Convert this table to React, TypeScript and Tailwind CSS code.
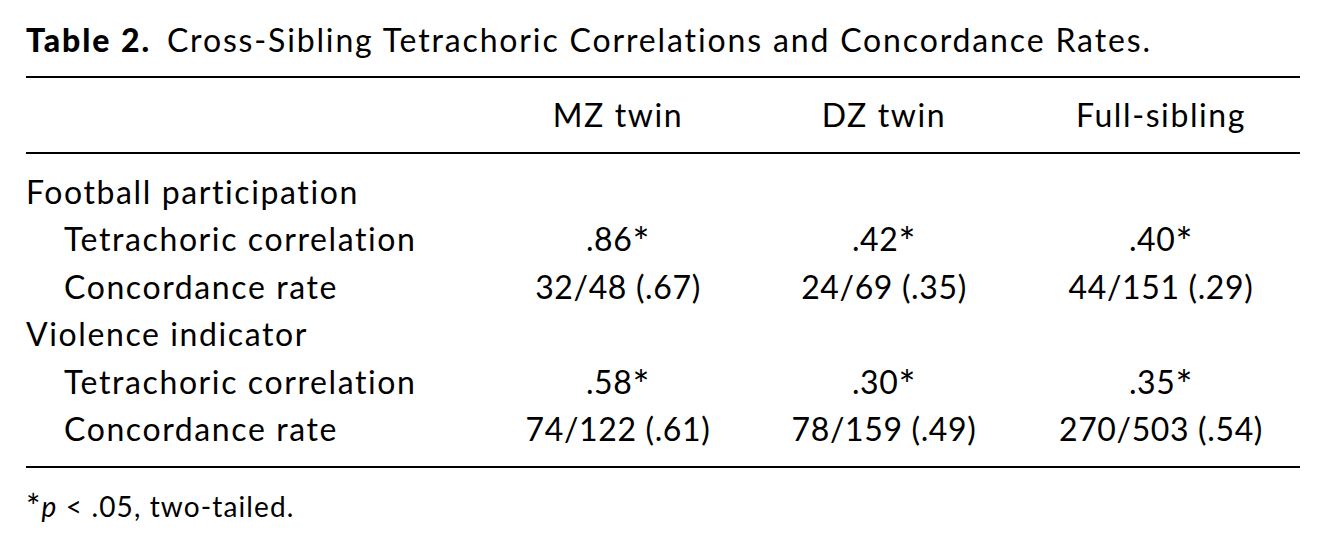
const rows: { label: string; indent?: boolean; values?: string[] }[] = [
  { label: 'Football participation' },
  { label: 'Tetrachoric correlation', indent: true, values: ['.86*', '.42*', '.40*'] },
  { label: 'Concordance rate', indent: true, values: ['32/48 (.67)', '24/69 (.35)', '44/151 (.29)'] },
  { label: 'Violence indicator' },
  { label: 'Tetrachoric correlation', indent: true, values: ['.58*', '.30*', '.35*'] },
  { label: 'Concordance rate', indent: true, values: ['74/122 (.61)', '78/159 (.49)', '270/503 (.54)'] },
]

function Value({ text }: { text: string }) {
  // asterisk sits raised and large, like the Gill Sans mark
  if (text.endsWith('*')) {
    return (
      <span>
        {text.slice(0, -1)}
        <span className="relative top-[6px] text-[40px] leading-none">*</span>
      </span>
    )
  }
  return <span>{text}</span>
}

export default function App() {
  return (
    <div className="w-[1327px] h-[548px] bg-white text-black font-['Lato',sans-serif] px-[26px] pt-[18px]">
      <h1 className="text-[32px] leading-[44px] tracking-[0.058em] whitespace-nowrap">
        <span className="font-black tracking-[0.06em]">Table 2.</span>
        <span className="ml-[16px]">Cross-Sibling Tetrachoric Correlations and Concordance Rates.</span>
      </h1>

      <div className="w-[1274px] mt-[14px] border-t-2 border-black" />

      <div className="grid grid-cols-[464px_256px_276px_278px] text-[32px] tracking-[0.05em] h-[74px] items-center text-center">
        <div />
        <div>MZ twin</div>
        <div>DZ twin</div>
        <div>Full-sibling</div>
      </div>

      <div className="w-[1274px] border-t-2 border-black" />

      <div className="pt-[14px] pb-[14px] text-[32px] tracking-[0.05em]">
        {rows.map((row, i) => (
          <div key={i} className="grid grid-cols-[464px_256px_276px_278px] h-[47.4px] items-center">
            <div className={row.indent ? 'pl-[38px] whitespace-nowrap' : 'whitespace-nowrap'}>{row.label}</div>
            {(row.values ?? ['', '', '']).map((v, j) => (
              <div key={j} className="text-center whitespace-nowrap tracking-[0.02em]">
                {v && <Value text={v} />}
              </div>
            ))}
          </div>
        ))}
      </div>

      <div className="w-[1274px] border-t-2 border-black" />

      <p className="mt-[19px] text-[28px] leading-[36px] tracking-[0.04em]">
        <span className="relative top-[2px] text-[34px] leading-none">*</span>
        <span className="italic">p</span> &lt; .05, two-tailed.
      </p>
    </div>
  )
}
